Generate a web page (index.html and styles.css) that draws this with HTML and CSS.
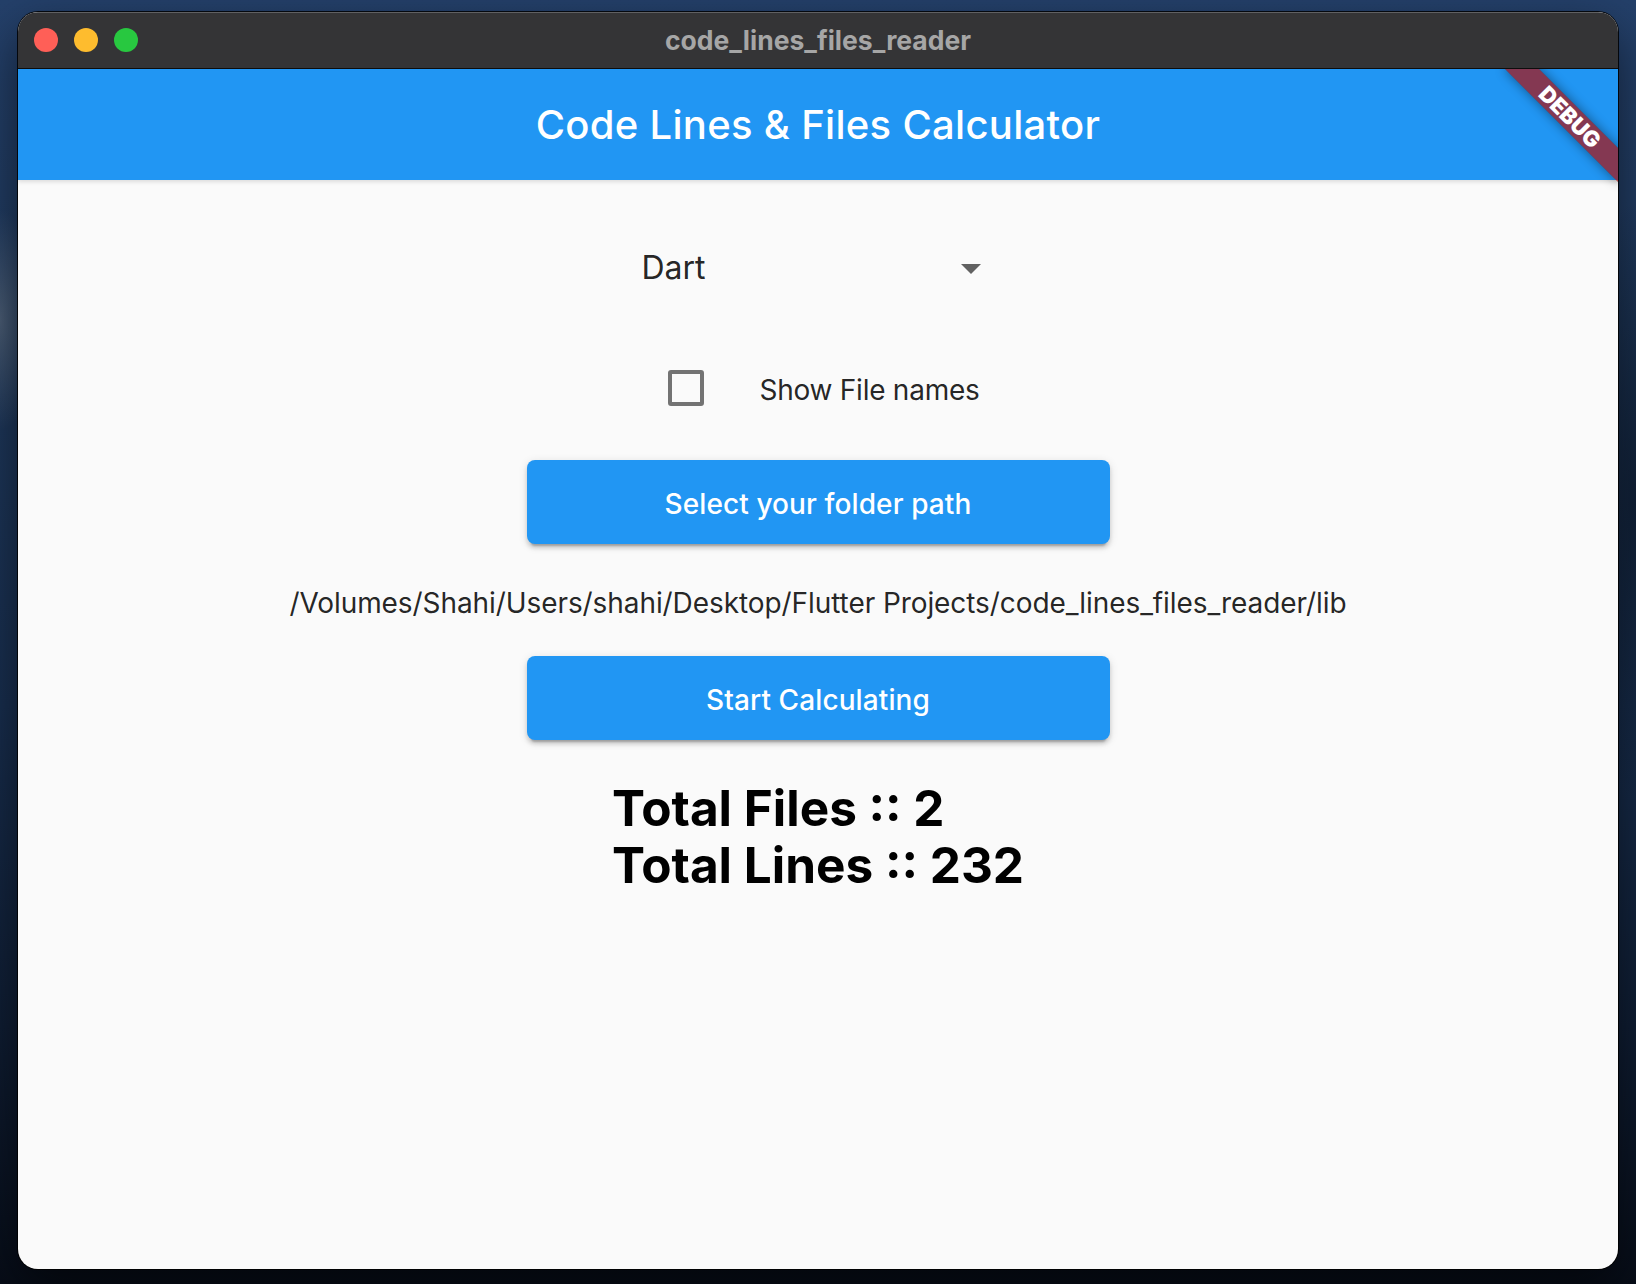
FILE: index.html
```html
<!DOCTYPE html>
<html>
<head>
<meta charset="utf-8">
<title>code_lines_files_reader</title>
<link rel="stylesheet" href="styles.css">
</head>
<body>
<div class="desktop">
  <div class="window">
    <div class="titlebar">
      <div class="lights">
        <span class="light red"></span>
        <span class="light yellow"></span>
        <span class="light green"></span>
      </div>
      <div class="wtitle">code_lines_files_reader</div>
      <div></div>
    </div>
    <div class="app">
      <header class="appbar">Code Lines &amp; Files Calculator</header>
      <main class="content">
        <div class="dropdown">
          <span class="dd-value">Dart</span>
          <svg class="dd-icon" viewBox="0 0 24 24" width="48" height="48"><path d="M7 10l5 5 5-5z" fill="#616161"/></svg>
        </div>
        <div class="check-row">
          <span class="checkbox"></span>
          <span class="check-label">Show File names</span>
        </div>
        <button class="btn">Select your folder path</button>
        <div class="path">/Volumes/Shahi/Users/shahi/Desktop/Flutter Projects/code_lines_files_reader/lib</div>
        <button class="btn btn2">Start Calculating</button>
        <div class="totals">
          <div>Total Files :: 2</div>
          <div>Total Lines :: 232</div>
        </div>
      </main>
      <div class="debug">DEBUG</div>
    </div>
  </div>
</div>
</body>
</html>
```

FILE: styles.css
```css
* { box-sizing: border-box; }
html, body { margin: 0; padding: 0; }
body {
  width: 1636px;
  height: 1284px;
  overflow: hidden;
  font-family: Inter, "Noto Sans", "Liberation Sans", sans-serif;
  background:
    radial-gradient(ellipse 40px 110px at 0 320px, rgba(110, 122, 136, 0.55), rgba(110, 122, 136, 0) 100%),
    radial-gradient(ellipse 60px 300px at 1636px 500px, rgba(10, 20, 35, 0.6), rgba(10, 20, 35, 0) 100%),
    linear-gradient(180deg, #24406a 0%, #1f395d 25%, #182e4e 55%, #0f1d33 80%, #070d18 100%);
}
.desktop { padding: 12px 0 0 18px; }
.window {
  width: 1600px;
  height: 1257px;
  border-radius: 20px;
  overflow: hidden;
  background: #fafafa;
  display: flex;
  flex-direction: column;
  box-shadow: 0 0 0 1px rgba(0, 0, 0, 0.85), 0 20px 50px rgba(0, 0, 0, 0.55);
}
.titlebar {
  height: 57px;
  flex: none;
  background: #343436;
  border-bottom: 1px solid #0d0d0d;
  box-shadow: inset 0 1px 0 rgba(255, 255, 255, 0.22);
  display: grid;
  grid-template-columns: 1fr auto 1fr;
  align-items: center;
}
.lights { display: flex; gap: 16px; padding-left: 16px; }
.light { width: 24px; height: 24px; border-radius: 50%; display: block; }
.red { background: #ff5f57; }
.yellow { background: #febc2e; }
.green { background: #28c840; }
.wtitle {
  color: #a6a6a6;
  font-weight: 700;
  font-size: 26.5px;
  line-height: 1;
  padding-top: 1px;
}
.app {
  position: relative;
  flex: 1;
  overflow: hidden;
  display: flex;
  flex-direction: column;
}
.appbar {
  height: 111px;
  flex: none;
  background: #2196f3;
  color: #fff;
  display: flex;
  align-items: center;
  justify-content: center;
  font-size: 40px;
  font-weight: 500;
  letter-spacing: 0.3px;
  box-shadow: 0 2px 4px rgba(0, 0, 0, 0.12);
}
.content {
  display: flex;
  flex-direction: column;
  align-items: center;
}
.dropdown {
  margin-top: 40px;
  height: 96px;
  width: 353px;
  display: flex;
  align-items: center;
  justify-content: space-between;
}
.dd-value {
  font-size: 32px;
  line-height: 1;
  color: rgba(0, 0, 0, 0.87);
}
.dd-icon { display: block; }
.check-row {
  margin-top: 36px;
  height: 72px;
  display: flex;
  align-items: center;
  gap: 55px;
  padding-left: 12px;
}
.checkbox {
  width: 36px;
  height: 36px;
  border: 4px solid rgba(0, 0, 0, 0.54);
  border-radius: 3px;
  display: block;
}
.check-label {
  font-size: 28px;
  line-height: 1;
  letter-spacing: -0.25px;
  padding-top: 4px;
  color: rgba(0, 0, 0, 0.87);
}
.btn {
  margin-top: 36px;
  width: 583px;
  height: 84px;
  padding-top: 4px;
  border: none;
  border-radius: 8px;
  background: #2196f3;
  color: #fff;
  font-family: inherit;
  font-size: 28px;
  font-weight: 500;
  letter-spacing: 0.1px;
  box-shadow: 0 6px 2px -4px rgba(0, 0, 0, 0.2), 0 4px 4px 0 rgba(0, 0, 0, 0.14), 0 2px 10px 0 rgba(0, 0, 0, 0.12);
}
.btn2 { margin-top: 33px; }
.path {
  margin-top: 39px;
  font-size: 28px;
  line-height: 40px;
  letter-spacing: -0.08px;
  color: rgba(0, 0, 0, 0.87);
}
.totals {
  margin-top: 40px;
  font-size: 49.5px;
  line-height: 57px;
  font-weight: 700;
  color: #000;
}
.debug {
  position: absolute;
  top: 36px;
  right: -32px;
  width: 160px;
  height: 24px;
  transform: rotate(45deg);
  background: rgba(170, 20, 20, 0.72);
  box-shadow: 0 0 12px rgba(0, 0, 0, 0.45);
  color: #fff;
  font-size: 22px;
  font-weight: 900;
  line-height: 24px;
  text-align: center;
}
```
